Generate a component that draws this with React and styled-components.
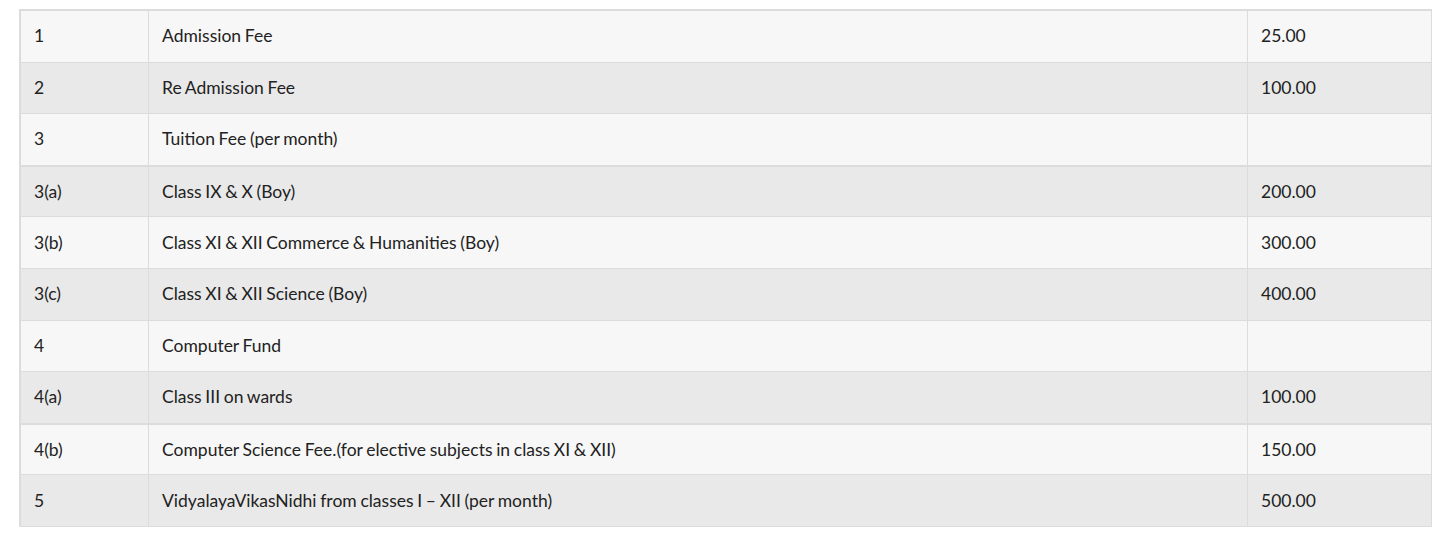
import styled, { createGlobalStyle } from "styled-components";

const GlobalStyle = createGlobalStyle`
    body {
        margin: 0;
        background: #fff;
        font-family: Lato, "Open Sans", sans-serif;
    }
`;

const fees = [
    { no: "1", name: "Admission Fee", amount: "25.00" },
    { no: "2", name: "Re Admission Fee", amount: "100.00" },
    { no: "3", name: "Tuition Fee (per month)", amount: "" },
    { no: "3(a)", name: "Class IX & X (Boy)", amount: "200.00", thick: true },
    { no: "3(b)", name: "Class XI & XII Commerce & Humanities (Boy)", amount: "300.00" },
    { no: "3(c)", name: "Class XI & XII Science (Boy)", amount: "400.00" },
    { no: "4", name: "Computer Fund", amount: "" },
    { no: "4(a)", name: "Class III on wards", amount: "100.00" },
    { no: "4(b)", name: "Computer Science Fee.(for elective subjects in class XI & XII)", amount: "150.00", thick: true },
    { no: "5", name: "VidyalayaVikasNidhi from classes I \u2013 XII (per month)", amount: "500.00" },
];

const App = () => {
    return (
        <Page>
            <GlobalStyle />
            <FeeTable>
                <colgroup>
                    <col style={{ width: 128 }} />
                    <col style={{ width: 1099 }} />
                    <col style={{ width: 184 }} />
                </colgroup>
                <tbody>
                    {fees.map((row, i) => (
                        <Row key={row.no} striped={i % 2 === 1}>
                            <Cell thick={row.thick}>{row.no}</Cell>
                            <Cell thick={row.thick}>{row.name}</Cell>
                            <Cell thick={row.thick}>{row.amount}</Cell>
                        </Row>
                    ))}
                </tbody>
            </FeeTable>
        </Page>
    );
};

export default App;

const Page = styled.div`
    padding: 9px 13px 0 19px;
`;

const FeeTable = styled.table`
    width: 1412px;
    table-layout: fixed;
    border-collapse: separate;
    border-spacing: 0;
    border: 1px solid #dcdcdc;
`;

const Row = styled.tr`
    background: ${props => props.striped ? "#e9e9e9" : "#f7f7f7"};
`;

const Cell = styled.td`
    padding: 0 0 1px 13px;
    border-top: ${props => props.thick ? "2px" : "1px"} solid #dcdcdc;
    border-left: 1px solid #dcdcdc;
    color: #222;
    font-size: 17.5px;
    word-spacing: -0.8px;
    vertical-align: middle;
    box-sizing: border-box;
    height: 51.6px;
`;
